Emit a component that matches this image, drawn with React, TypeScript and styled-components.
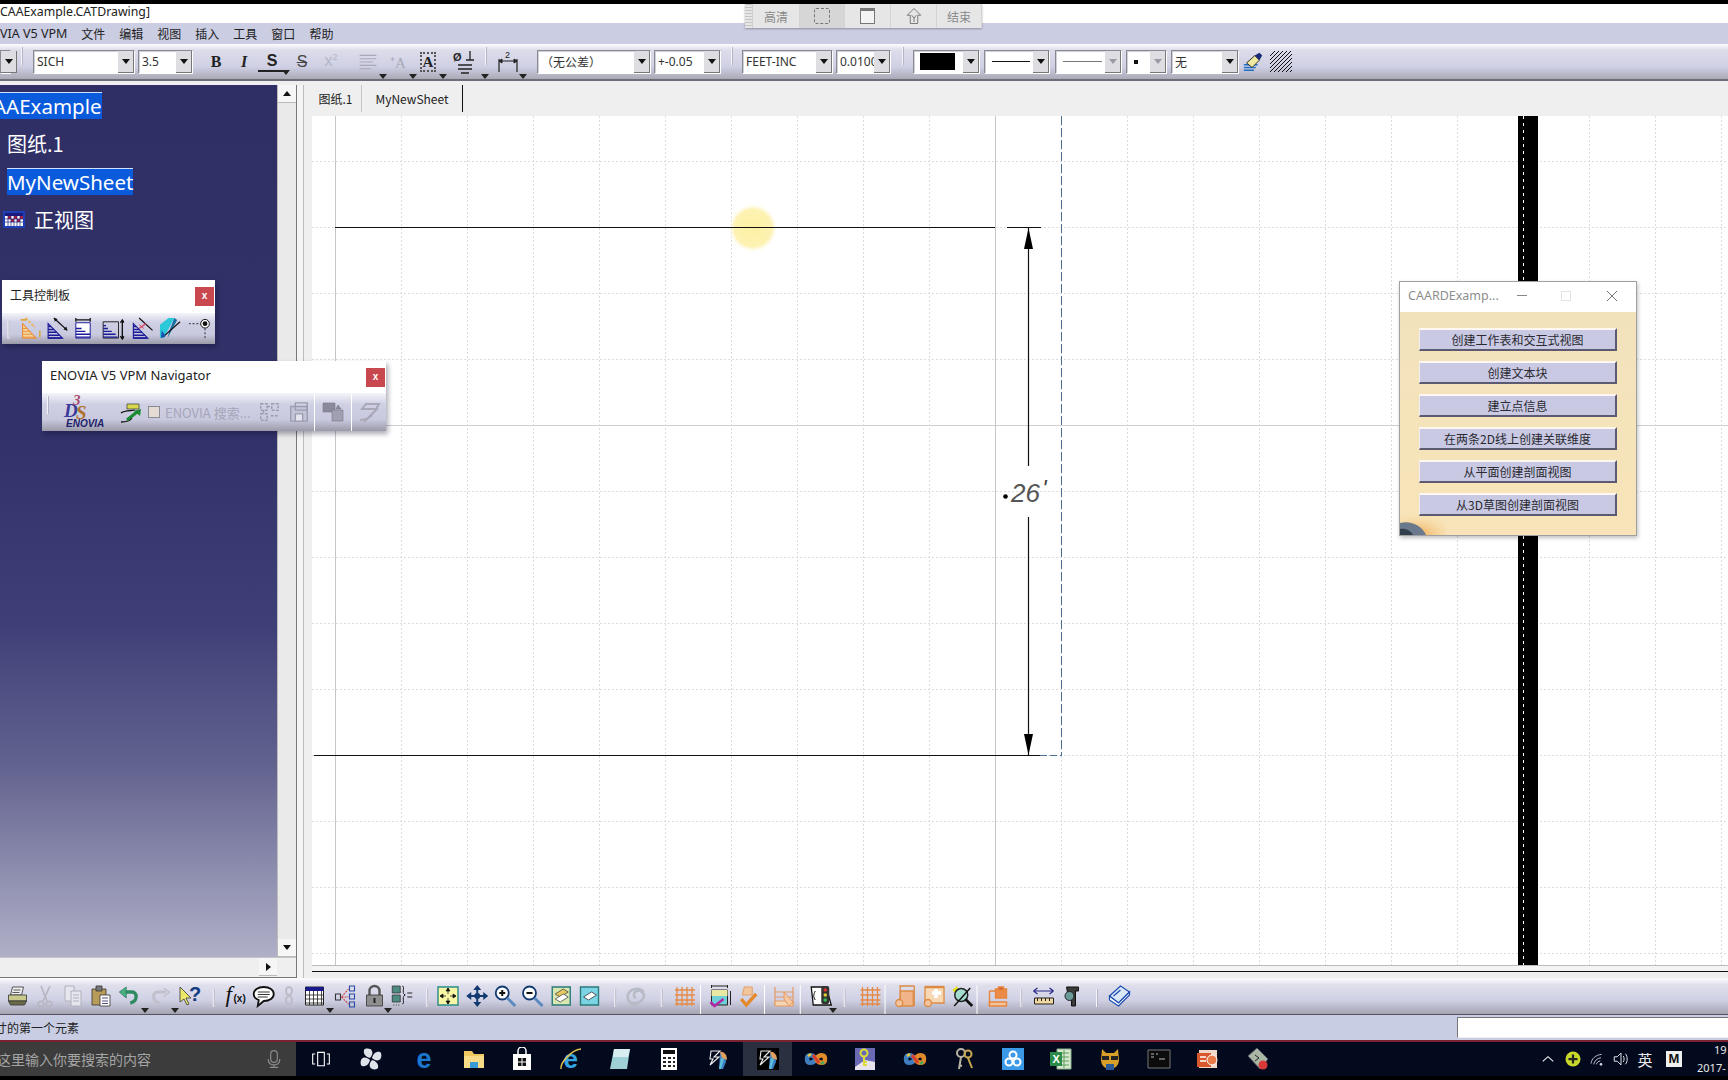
import React from "react";
import styled, { createGlobalStyle } from "styled-components";

const SANS = `"Noto Sans", "Noto Sans CJK SC", sans-serif`;
const CJK = `"Noto Sans CJK SC", "Noto Sans", sans-serif`;

const Global = createGlobalStyle`
  html, body { margin: 0; padding: 0; height: 100%; overflow: hidden; background: #000; }
  #root { height: 100%; }
  * { box-sizing: border-box; }
`;

/* ---------- drawn icons, all on a 24x24 box ---------- */
const hatch = (c: string) => (
  <g stroke={c} strokeWidth="1.5">
    <path d="M3 22h14M3 19h12M3 16h9M3 13h6M3 10h3" />
    <path d="M3 7v15h15z" fill="none" strokeWidth="1.2" />
  </g>
);
const orangeGrid = (
  <path d="M4 3v19M9 3v19M14 3v19M19 3v19M2 6h20M2 11h20M2 16h20M2 20h20" stroke="#e58a45" strokeWidth="1.3" fill="none" />
);
const dsMark = (bg: string) => (
  <g>
    {bg !== "none" && <rect x="1" y="1" width="22" height="22" fill={bg} />}
    <path d="M14 6c4 1 6 5 6 9l-3 7h-4z" fill="#3d7fc4" />
    <path d="M14 5c4-1 7 3 7 8l-5-2z" fill="#e0a060" />
    <path d="M15 11l3 1-3 10h-2z" fill="#5cc0d8" />
    <path d="M5 4h9L8 10h5l-9 8 3-6H4z" fill="none" stroke="#eee" strokeWidth="1.1" />
  </g>
);
const infinity = (
  <g fill="none" strokeWidth="4.5">
    <path d="M12 12c-3-5-9-5-9 0s6 5 9 0" stroke="#3f7fc0" />
    <path d="M12 12c3-5 9-5 9 0s-6 5-9 0" stroke="#e08a2c" />
    <path d="M9 8l6 8" stroke="#d8402c" strokeWidth="3" />
    <path d="M4 9l3-2" stroke="#e8c83c" strokeWidth="2.5" />
    <path d="M17 17l3-2" stroke="#4aa85a" strokeWidth="2.5" />
  </g>
);

const ICONS: Record<string, React.ReactNode> = {
  printer: (<g stroke="#333" strokeWidth=".8"><path d="M7 3h11l-2 8H5z" fill="#eee" /><path d="M3 11h18v6H3z" fill="#c9c98c" /><path d="M3 17h18l-2 4H5z" fill="#6b6b4a" /><path d="M8 6h7M7 8.500h7" /></g>),
  scissors: (<g fill="none" stroke="#b5b5c2" strokeWidth="1.6"><path d="M8 2l6 15M17 2l-7 15" /><circle cx="8" cy="20" r="2.800" /><circle cx="16" cy="20" r="2.800" /></g>),
  copy: (<g fill="#e6e6ee" stroke="#b0b0bc"><path d="M4 2h9v15H4z" /><path d="M10 7h10v15H10z" /><path d="M12 11h6M12 14h6M12 17h6" /></g>),
  paste: (<g stroke="#333" strokeWidth=".8"><path d="M3 5h14v16H3z" fill="#b79c5a" /><path d="M7 2h6v5H7z" fill="#777" /><path d="M11 11h10v11H11z" fill="#fff" /><path d="M13 14h6M13 17h6M13 19.500h6" stroke="#226" /></g>),
  undo: (<g fill="none"><path d="M6 8h9c5 0 6 9-2 11" stroke="#2f8a5f" strokeWidth="3.400" /><path d="M9 3L2 8l7 6z" fill="#48b080" stroke="#1a6a50" strokeWidth=".6" /></g>),
  redo: (<g fill="none" stroke="#c0c0cc" strokeWidth="3"><path d="M18 8H9c-5 0-6 9 2 11" /><path d="M15 4l6 4-6 5" strokeWidth="1.500" /></g>),
  help: (<g><path d="M3 3v15l4-3 3 6 2-1-3-6h5z" fill="#eee86a" stroke="#333" strokeWidth=".8" /><text x="12" y="17" fontFamily="Liberation Sans, sans-serif" fontWeight="700" fontSize="20" fill="#123a80">?</text></g>),
  fx: (<g fill="#111"><text x="1" y="18" fontFamily="Liberation Serif, serif" fontStyle="italic" fontSize="23">f</text><text x="9" y="18" fontFamily="Liberation Sans, sans-serif" fontSize="10" fontWeight="700">(x)</text></g>),
  comment: (<g><path d="M12 3c6 0 10 3 10 7s-4 7-10 7l-6 5 1-6c-3-1-5-3-5-6 0-4 4-7 10-7z" fill="#fff" stroke="#111" strokeWidth="1.800" /><path d="M6 8h12M6 10.500h12M6 13h10" stroke="#333" strokeWidth="1" /></g>),
  link: (<g fill="none" stroke="#bcbcc8" strokeWidth="2"><ellipse cx="12" cy="7" rx="3" ry="4" /><ellipse cx="12" cy="16" rx="3" ry="4" /></g>),
  table: (<g><path d="M3 3h18v18H3z" fill="#fff" stroke="#222" /><path d="M3 3h18v4H3z" fill="#18188c" /><path d="M7 7v14M11 7v14M15 7v14M19 7v14M3 11h18M3 15h18M3 19h18" stroke="#222" strokeWidth=".8" /></g>),
  tree: (<g fill="none" strokeWidth="1.100"><path d="M2 10h5v6H2z" stroke="#333" /><path d="M16 2h5v5h-5zM16 10h5v5h-5zM16 18h5v5h-5z" stroke="#2a4aa8" /><path d="M8 13l7-8M8 13h7M8 13l7 7" stroke="#c44" strokeDasharray="2 1" /></g>),
  lock: (<g><path d="M7 11V7a5 5 0 0 1 10 0v4" fill="none" stroke="#555" strokeWidth="2.400" /><path d="M4 11h16v11H4z" fill="#8f8f8f" stroke="#333" strokeWidth=".8" /><path d="M12 14v5" stroke="#222" strokeWidth="2" /></g>),
  formula: (<g><path d="M3 2h8v7H3zM3 11h8v7H3z" fill="#4d8a80" stroke="#333" strokeWidth=".8" /><path d="M4 21h1M6.500 21h1M9 21h1" stroke="#333" /><path d="M13 2c2 0 1 3 1 5s0 3 2 4c-2 1-2 2-2 4s1 5-1 5" fill="none" stroke="#222" /><path d="M18 9h5M18 13h5" stroke="#222" /></g>),
  fit: (<g><path d="M2 3h20v18H2z" fill="#f6f6a4" stroke="#2a8a8a" strokeWidth="1.400" /><path d="M12 4v6M12 14v6M4 12h6M14 12h6M12 4l-2 3h4zM12 20l-2-3h4zM4 12l3-2v4zM20 12l-3-2v4z" stroke="#111" fill="#111" strokeWidth=".7" /></g>),
  pan: (<g fill="#123a70"><path d="M12 1l4 5h-8zM12 23l4-5h-8zM1 12l5-4v8zM23 12l-5-4v8z" /><path d="M12 5v14M5 12h14" stroke="#123a70" strokeWidth="2" /><circle cx="12" cy="12" r="3" /></g>),
  zoomin: (<g fill="none"><circle cx="9" cy="9" r="6.500" stroke="#123a70" strokeWidth="1.800" fill="#fff" /><path d="M6 9h6M9 6v6" stroke="#111" strokeWidth="2" /><path d="M14 14l8 8" stroke="#5a8ac0" strokeWidth="3" /></g>),
  zoomout: (<g fill="none"><circle cx="9" cy="9" r="6.500" stroke="#123a70" strokeWidth="1.800" fill="#fff" /><path d="M6 9h6" stroke="#111" strokeWidth="2" /><path d="M14 14l8 8" stroke="#5a8ac0" strokeWidth="3" /></g>),
  view1: (<g><path d="M3 3h18v18H3z" fill="#d8e8b0" stroke="#2a7a7a" strokeWidth="1.400" /><path d="M6 10l8-5 5 3-8 5z" fill="#e8c860" stroke="#333" strokeWidth=".7" /><path d="M6 15l8-5 5 3-8 5z" fill="#fff" stroke="#333" strokeWidth=".7" /></g>),
  view2: (<g><path d="M3 3h18v18H3z" fill="#7ad4e4" stroke="#2a7a7a" strokeWidth="1.400" /><path d="M6 13l8-5 5 3-8 5z" fill="#fff" stroke="#333" strokeWidth=".8" /></g>),
  cycle: (<g fill="none" stroke="#b8bcc6" strokeWidth="2.600"><path d="M20 8a9.500 9.500 0 0 0-16 3c-1 7 5 11 10 10" /><path d="M4 16a9.500 9.500 0 0 0 16-3c1-4-3-7-7-6-3 1-4 5-1 7" /></g>),
  gridO: orangeGrid,
  mark: (<g><path d="M4 6h16v15H4z" fill="#6ecfd8" stroke="#222" /><path d="M4 6h16v6H4z" fill="#e8e8a4" /><path d="M4 2h16M4 1v3M20 1v3" stroke="#222" /><path d="M3 18l4 4 9-7" fill="none" stroke="#b02aa8" strokeWidth="2.600" /><path d="M23 7v14" stroke="#222" /></g>),
  handCheck: (<g fill="none"><path d="M8 3h8v8H6z" fill="#f2c49a" stroke="#e2a06a" /><path d="M5 15l5 6 10-11" stroke="#e58a2c" strokeWidth="3.400" /></g>),
  hatchHand: (<g fill="none" stroke="#e59a60"><path d="M3 3v19M21 3v19M3 8h18M3 13h18" strokeWidth="1.200" /><path d="M3 17h18v5H3z" fill="#f4d4b4" /><path d="M12 8l9 10-4 4-5-7z" fill="#f4c8a0" /></g>),
  traffic: (<g><path d="M2 3h15l5 18H4z" fill="#fff" stroke="#111" strokeWidth="1.300" /><path d="M6 7c-2 4-2 6 0 9" fill="none" stroke="#111" /><rect x="12" y="2" width="8" height="18" rx="2" fill="#333" /><circle cx="16" cy="6" r="1.800" fill="#d33" /><circle cx="16" cy="11" r="1.800" fill="#dc3" /><circle cx="16" cy="16" r="1.800" fill="#3b5" /></g>),
  hatchA: (<g fill="none" stroke="#dd8a44" strokeWidth="1.300"><path d="M5 2h15M6 2v20M20 2v20" /><path d="M6 7h13v15H6z" fill="#f0b488" /><circle cx="5" cy="19" r="3.500" fill="#f4c49c" /></g>),
  hatchB: (<g fill="none" stroke="#dd8a44" strokeWidth="1.300"><path d="M3 3h19v16H3z" fill="#f6d8b4" /><path d="M10 9h9M14 5v9" stroke="#fff" strokeWidth="3.400" /><path d="M3 3h19" strokeWidth="2.400" /><circle cx="6" cy="19" r="3.500" fill="#f4c49c" /></g>),
  yellowMag: (<g><path d="M2 6l5-4 1 5 4-1-5 5z" fill="#e4e418" /><circle cx="11" cy="11" r="6.500" fill="#a4dcd0" stroke="#222" strokeWidth="1.500" /><path d="M4 22L20 4" stroke="#111" strokeWidth="1.500" /><path d="M15 15l7 7" stroke="#111" strokeWidth="2.600" /></g>),
  hatchC: (<g fill="none" stroke="#e8853c" strokeWidth="1.400"><path d="M3 7v15M3 7h15" /><path d="M9 5h11v9H9z" fill="#ec8a48" /><path d="M3 18h17v4H3z" fill="#f4c49c" /><path d="M12 3h5v3h-5z" fill="#d05a30" /></g>),
  measure: (<g fill="none"><path d="M2 7h20M2 7l4-3M2 7l4 3M22 7l-4-3M22 7l-4 3" stroke="#2a2a8a" strokeWidth="1.200" /><path d="M3 14h19v6H3z" fill="#f0d8a0" stroke="#222" /><path d="M6 14v3M10 14v3M14 14v3M18 14v3" stroke="#222" /></g>),
  caliper: (<g><path d="M7 3h12v4h-3v15h-4v-8H9z" fill="#3a3a3a" stroke="#111" /><circle cx="10" cy="12" r="4.500" fill="#6a9a9a" stroke="#222" /></g>),
  book: (<g fill="#dbe8fa" stroke="#1a4ab0" strokeWidth="1.200"><path d="M2 12L13 2l9 6-11 11z" /><path d="M2 12v4l9 6 11-11V8L11 19z" fill="#fff" /><path d="M6 12l7-6" /></g>),
  palA: (<g fill="none"><path d="M4 7v15h14z" fill="#f6d6a0" stroke="#e8903c" strokeWidth="1.200" /><path d="M4 21h13M4 18h10M4 15h7M4 12h4" stroke="#e8903c" /><path d="M7 1l10 10" stroke="#e8b860" strokeWidth="2" strokeDasharray="3 1.500" /><path d="M22 14v7M2 3h6" stroke="#d8a840" strokeWidth="1.600" /></g>),
  palB: (<g fill="none">{hatch("#1a1a9a")}<path d="M9 1l14 13" stroke="#111" strokeWidth="1.300" /><path d="M9 1l1 4 3-3zM23 14l-4-1 3-3z" fill="#111" /></g>),
  palC: (<g fill="none"><path d="M4 6v16h15V6z" fill="#fff" stroke="#1a1a9a" /><path d="M4 21h15M4 18h15M4 15h10M4 12h6" stroke="#1a1a9a" strokeWidth="1.500" /><path d="M4 3h15M4 1v4M19 1v4" stroke="#111" strokeWidth="1.300" /></g>),
  palD: (<g fill="none"><path d="M2 5h16v17H2z" stroke="#222" /><path d="M2 21h15M2 18h13M2 15h9M2 12h5M2 9h3" stroke="#1a1a9a" strokeWidth="1.500" /><path d="M22 4v18M20 6l2-3 2 3M20 20l2 3 2-3" stroke="#111" strokeWidth="1.400" /></g>),
  palE: (<g fill="none">{hatch("#1a1a9a")}<path d="M9 1l14 13" stroke="#111" strokeWidth="1.300" /><path d="M9 12l7-5" stroke="#d84a6a" strokeWidth="1.500" /><path d="M9 8l5 4" stroke="#d84a6a" /></g>),
  palF: (<g fill="none"><path d="M2 8l9-7h6L6 22H2z" fill="#2ac8d8" /><path d="M12 14l5-13 3 2-10 19z" fill="#1870a0" /><path d="M5 21L23 5" stroke="#111" strokeWidth="1.300" /><path d="M4 14l-1 8 5-2z" fill="#1a50b0" /></g>),
  palG: (<g><path d="M0 7h13M17 12v11" stroke="#222" strokeDasharray="2 2" /><circle cx="17" cy="7" r="4.500" fill="#fff" stroke="#111" /><circle cx="17" cy="7" r="2.500" fill="#111" /></g>),
  navA: (<g fill="none"><path d="M8 4h12v5H8z" fill="#d8d84a" stroke="#333" strokeWidth=".7" /><path d="M2 13c3-3 12-2 14-3" stroke="#111" strokeWidth="1.300" /><path d="M2 22c3 0 9-1 11-4" stroke="#111" strokeWidth="1.300" /><path d="M8 20l10-8" stroke="#1a8a30" strokeWidth="3" /><path d="M22 9l-1 7-6-5z" fill="#1a8a30" /></g>),
  navB: (<g fill="none" stroke="#9c9cb0" strokeWidth="1.600" strokeDasharray="3 1.500"><path d="M3 3h7v7H3zM15 3h7v7h-7zM3 14h7v7H3zM10 6h5M6 10v4M14 16h8" /></g>),
  navC: (<g fill="none" stroke="#9c9cb0" strokeWidth="1.500"><path d="M3 6h18v16H3z" fill="#c4c4d8" /><path d="M8 2h13v8H8z" /><path d="M8 14h8v8H8z" fill="#e4e4ee" /></g>),
  navD: (<g fill="#8a8a9c" stroke="#777785" strokeWidth=".6"><path d="M2 3h12v9H2z" /><path d="M11 10h11v11H11z" fill="#a0a0b2" /><path d="M17 5l3 4h-5z" /></g>),
  navE: (<g fill="none" stroke="#a8a8b8" strokeWidth="2"><path d="M5 9h14l3-5H9zM3 20c4 0 10-2 12-5M7 22l14-14" /></g>),
  taskView: (<g fill="none" stroke="#fff" strokeWidth="1.300"><path d="M8 4h8v16H8z" /><path d="M5 6H2v12h3M19 6h3v12h-3" /></g>),
  fan: (<g fill="#dfe4ea"><path d="M11 11C7 10 4 7 5 3c1-2 7-2 8 1 1 2 0 5-2 7z" /><path d="M13 11c1-4 4-7 8-6 2 1 2 7-1 8-2 1-5 0-7-2z" /><path d="M13 13c4 1 7 4 6 8-1 2-7 2-8-1-1-2 0-5 2-7z" /><path d="M11 13c-1 4-4 7-8 6-2-1-2-7 1-8 2-1 5 0 7 2z" /></g>),
  edge: (<text x="4.500" y="21" fontFamily="Liberation Sans, sans-serif" fontWeight="700" fontSize="27" fill="#1a78d0">e</text>),
  folder: (<g><path d="M2 4h8l2 3h10v14H2z" fill="#f0c860" /><path d="M2 9h20v12H2z" fill="#f8dc88" /><path d="M8 15h8v6H8z" fill="#3a9ad8" /></g>),
  store: (<g><path d="M3 7h18v16H3z" fill="#fff" /><path d="M8 8V4a4 4 0 0 1 8 0v4" fill="none" stroke="#fff" strokeWidth="1.500" /><path d="M8 11h3.500v3.500H8zM12.500 11H16v3.500h-3.500zM8 15.500h3.500V19H8zM12.500 15.500H16V19h-3.500z" fill="#111" /></g>),
  ie: (<g><text x="4.500" y="21" fontFamily="Liberation Sans, sans-serif" fontWeight="700" fontSize="26" fill="#33a4e4">e</text><path d="M2 22C1 16 12 3 22 2" fill="none" stroke="#e0c050" strokeWidth="1.500" /></g>),
  notepad: (<g><path d="M6 2h16l-3 20H2z" fill="#9ed0d8" /><path d="M6 2h16l-2 8H5z" fill="#d8eef0" /></g>),
  calc: (<g><path d="M4 1h16v22H4z" fill="#fff" /><path d="M6 3h12v4H6z" fill="#111" /><path d="M6 10h3v2H6zM11 10h3v2h-3zM16 10h2v2h-2zM6 14h3v2H6zM11 14h3v2h-3zM16 14h2v2h-2zM6 18h3v2H6zM11 18h3v2h-3zM16 18h2v2h-2z" fill="#222" /></g>),
  ds: dsMark("none"),
  dsBlack: dsMark("#000"),
  infinity,
  keyBook: (<g><path d="M2 1h20v22H2z" fill="#6a6ab4" /><path d="M2 20l10-7 10 2v8H2z" fill="#e8e4ee" /><circle cx="11" cy="6" r="3.500" fill="none" stroke="#dcdc3a" strokeWidth="2" /><path d="M11 9v10M11 15h3M11 18h3" stroke="#dcdc3a" strokeWidth="2" /></g>),
  keys: (<g fill="none" stroke="#b8b4a4" strokeWidth="2"><circle cx="9" cy="6" r="4" /><path d="M9 10l-2 12M7 18l3 1" /><circle cx="16" cy="7" r="3.500" stroke="#c8a850" /><path d="M16 11l4 10" stroke="#c8a850" /></g>),
  baidu: (<g><path d="M1 1h22v22H1z" fill="#3b9ae8" /><g fill="none" stroke="#fff" strokeWidth="2"><circle cx="12" cy="8" r="3.500" /><circle cx="8" cy="15" r="3.500" /><circle cx="16" cy="15" r="3.500" /></g></g>),
  excel: (<g><path d="M8 2h14v20H8z" fill="#d8e8d0" stroke="#8ab08a" /><path d="M11 6h9M11 10h9M11 14h9M11 18h9M15 3v18" stroke="#5aa05a" /><path d="M1 5h12v14H1z" fill="#2a8a4a" /><text x="3.500" y="16" fontFamily="Liberation Sans, sans-serif" fontWeight="700" fontSize="11" fill="#fff">X</text></g>),
  cat: (<g><path d="M4 2l4 4h8l4-4 1 11c0 5-4 9-9 9s-9-4-9-9z" fill="#d8a028" /><path d="M4 9h7v4H4zM13 9h7v4h-7z" fill="#222" /><path d="M8 17h8v6H8z" fill="#2a5a9a" /></g>),
  cmd: (<g><path d="M1 3h22v18H1z" fill="#0c0c0c" stroke="#777" /><path d="M4 7h3M9 7h2M4 10h3M12 12h6" stroke="#bbb" /></g>),
  ppt: (<g><path d="M3 3h18v18H3z" fill="#f0d8c8" /><path d="M1 6h14v14H1z" fill="#d8582c" /><circle cx="16" cy="13" r="5" fill="#e87a4a" stroke="#fff" /><path d="M4 10h6M4 14h6" stroke="#fff" strokeWidth="1.500" /></g>),
  tool: (<g><path d="M11 1l11 11-8 10L2 9z" fill="#a8b8a4" stroke="#556" /><path d="M9 8l4 3-4 3" fill="none" stroke="#222" /><circle cx="17" cy="18" r="4.500" fill="#d83a3a" /></g>),
  caret: (<path d="M3 16l9-8 9 8" fill="none" stroke="#eee" strokeWidth="2" />),
  plus: (<g><circle cx="12" cy="12" r="10" fill="#c8d82a" /><path d="M12 6v12M6 12h12" stroke="#222" strokeWidth="3" /></g>),
  wifi: (<g fill="none" stroke="#d0d4dc" strokeWidth="1.300"><path d="M3 19c1-8 7-13 16-14" /><path d="M7 20c1-5 5-9 11-10" /><path d="M11 20c1-3 3-5 6-5" /><circle cx="18" cy="20" r="1.500" fill="#eee" /></g>),
  speaker: (<g fill="none" stroke="#e0e4ea" strokeWidth="1.300"><path d="M3 9h4l5-5v16l-5-5H3z" /><path d="M15 8c1.500 2 1.500 6 0 8M18 5c3 4 3 10 0 14" /></g>),
  mic: (<g fill="none" stroke="#8a8a8a" strokeWidth="1.400"><rect x="8" y="2" width="8" height="14" rx="4" /><path d="M5 12c0 5 3 7 7 7s7-2 7-7M12 19v3M7 22h10" /></g>),
  tree3d: (<g><rect x="1" y="4" width="22" height="17" fill="#1f3fb8" /><rect x="3" y="6" width="18" height="13" fill="#fff" /><path d="M3 6h18v3H3z" fill="#1a1a7a" /><path d="M6 9h3v3H6zM12 9h3v3h-3zM18 9h3v3h-3zM9 12h3v3H9zM15 12h3v3h-3z" fill="#b0203a" /><path d="M6 9v10M9 9v10M12 9v10M15 9v10M18 9v10M3 12h18M3 15h18" stroke="#1a1a7a" strokeWidth=".7" /></g>),
  brush: (<g><path d="M2 15h15M2 18h13M2 21h11" stroke="#2070c8" strokeWidth="1.600" /><path d="M5 13l9-8 5 5-8 8z" fill="#f0e8a0" stroke="#222" /><path d="M14 5l5-3 3 3-3 5z" fill="#1a2a7a" /></g>),
  hatch: (<g stroke="#111" strokeWidth="1"><path d="M1 6l5-5M1 10l9-9M1 14L14 1M1 18L18 1M1 22L22 1M5 22L23 4M9 22l14-14M13 22l10-10M17 22l6-6M21 22l2-2" /></g>),
  align: (<path d="M2 4h20M2 8h20M2 12h16M2 16h20M2 20h14" stroke="#a8a8b8" strokeWidth="1.300" />),
  dim: (<g fill="none" stroke="#222"><path d="M3 11h18M3 9v13M21 9v13" strokeWidth="1.200" /><path d="M3 11l3-2v4zM21 11l-3-2v4z" fill="#222" /><text x="9" y="8" fontFamily="Liberation Sans, sans-serif" fontSize="9" fill="#222" stroke="none">2</text></g>),
  tol: (<g><text x="1" y="11" fontFamily="Liberation Sans, sans-serif" fontSize="11" fontWeight="700" fill="#222">Ø</text><path d="M14 10h8M18 1v9M6 15h14M6 19h14M9 23h8" stroke="#222" strokeWidth="1.300" /></g>),
  homeRec: (<g fill="none" stroke="#777" strokeWidth="1.300"><path d="M12 2L3 11h4v11h10V11h4z" /><path d="M9 11l3 4 3-4M12 15v5" /></g>),
};

const IconBox = styled.svg<{ $s: number }>`
  width: ${(p) => p.$s}px;
  height: ${(p) => p.$s}px;
  display: block;
  flex: none;
`;
const Ico = ({ n, s = 24 }: { n: string; s?: number }) => (
  <IconBox $s={s} viewBox="0 0 24 24">{ICONS[n]}</IconBox>
);

/* ---------- page frame ---------- */
const Page = styled.div`
  position: relative;
  width: 1728px;
  height: 1080px;
  overflow: hidden;
  display: flex;
  flex-direction: column;
  background: #efefef;
  font-family: ${SANS};
`;
const BlackBand = styled.div`
  height: 4px;
  background: #000;
  flex: none;
`;
const TitleBar = styled.div`
  height: 19px;
  flex: none;
  background: #fff;
  font-size: 12.3px;
  line-height: 15px;
  color: #222;
  white-space: nowrap;
`;
const MenuBar = styled.div`
  height: 21px;
  flex: none;
  display: flex;
  align-items: center;
  gap: 14px;
  background: #cbcde2;
  font-family: ${CJK};
  font-size: 12px;
  color: #222;
`;
const MenuLabel = styled.span`
  font-family: ${SANS};
  font-size: 12.5px;
`;
const ToolRow = styled.div`
  height: 37px;
  flex: none;
  display: flex;
  align-items: center;
  background: linear-gradient(#fdfdfe 0, #dcdcea 18%, #cfd0e4 65%, #a9a9b6 100%);
  border-bottom: 2px solid #6e6e78;
`;
const Gap = styled.div<{ $w: number }>`
  width: ${(p) => p.$w}px;
  flex: none;
`;
const Handle = styled.div`
  width: 2px;
  height: 18px;
  flex: none;
  align-self: flex-start;
  margin-top: 3px;
  background: #f4f4fa;
  border-right: 1px solid #b4b4c4;
`;
const Rule = styled.div`
  width: 1px;
  height: 29px;
  background: #fff;
  transform: translateY(3px);
`;
const Combo = styled.div<{ $w: number }>`
  width: ${(p) => p.$w}px;
  height: 24px;
  flex: none;
  display: flex;
  align-items: stretch;
  background: #fff;
  border: 1px solid #8a8a92;
  border-right-color: #fff;
  border-bottom-color: #fff;
  box-shadow: inset 1px 1px 0 #d0d0d8;
  font-size: 12px;
  color: #333;
`;
const ComboValue = styled.div`
  flex: 1;
  min-width: 0;
  overflow: hidden;
  padding-left: 3px;
  display: flex;
  align-items: center;
  white-space: nowrap;
  font-family: ${SANS};
`;
const ComboArrow = styled.div<{ $off?: boolean }>`
  width: 16px;
  flex: none;
  display: flex;
  align-items: center;
  justify-content: center;
  background: #dedee2;
  border-right: 1px solid #777;
  border-bottom: 1px solid #777;
  &::after {
    content: "";
    border-left: 4px solid transparent;
    border-right: 4px solid transparent;
    border-top: 5px solid ${(p) => (p.$off ? "#9a9aa4" : "#111")};
  }
`;
const Swatch = styled.div`
  width: 36px;
  height: 17px;
  background: #000;
  margin: auto 0 auto 6px;
`;
const RuleLine = styled.div<{ $l: number; $c: string }>`
  width: ${(p) => p.$l}px;
  height: 1px;
  background: ${(p) => p.$c};
  margin: auto 0 auto 7px;
`;
const Dot = styled.div`
  width: 4px;
  height: 4px;
  background: #111;
  margin: auto 0 auto 7px;
`;
const FontBtn = styled.div<{ $w: number; $c?: string; $serif?: boolean; $i?: boolean; $u?: boolean; $st?: boolean; $thin?: boolean }>`
  position: relative;
  width: ${(p) => p.$w}px;
  flex: none;
  text-align: center;
  font-family: ${(p) => (p.$serif ? `"Liberation Serif", serif` : `"Liberation Sans", sans-serif`)};
  font-weight: ${(p) => (p.$thin ? 400 : 700)};
  font-style: ${(p) => (p.$i ? "italic" : "normal")};
  font-size: 16px;
  color: ${(p) => p.$c || "#222"};
  text-decoration: ${(p) => (p.$st ? "line-through" : "none")};
  border-bottom: ${(p) => (p.$u ? "2px solid #222" : "none")};
`;
const SmallArrow = styled.i`
  position: absolute;
  right: -4px;
  bottom: -5px;
  width: 0;
  height: 0;
  border-left: 4px solid transparent;
  border-right: 4px solid transparent;
  border-top: 5px solid #222;
`;
const IconSlot = styled.div<{ $w: number }>`
  position: relative;
  width: ${(p) => p.$w}px;
  height: 24px;
  flex: none;
  display: flex;
  justify-content: center;
  align-items: center;
`;
const BoxA = styled.div`
  width: 16px;
  height: 20px;
  border: 2px dotted #555;
  font-family: "Liberation Serif", serif;
  font-size: 15px;
  line-height: 16px;
  text-align: center;
  color: #222;
  font-weight: 700;
`;
const FadedA = styled.span`
  font-family: "Liberation Serif", serif;
  font-size: 15px;
  color: #a8a8b8;
`;
const Sup = styled.sup`
  font-size: 9px;
`;

/* ---------- body ---------- */
const Body = styled.div`
  flex: 1;
  min-height: 0;
  display: flex;
  padding-top: 4px;
  background: #efefef;
`;
const LeftColumn = styled.div`
  width: 297px;
  flex: none;
  display: flex;
  flex-direction: column;
  border-right: 1px solid #777;
`;
const TreeRow = styled.div`
  flex: 1;
  min-height: 0;
  display: flex;
`;
const Tree = styled.div`
  flex: 1;
  min-width: 0;
  overflow: hidden;
  padding-top: 1px;
  background: linear-gradient(#2f2f66 0, #32326a 40%, #3f3f78 62%, #62628f 78%, #b0b0c8 100%);
  color: #fff;
`;
const TreeItem = styled.div<{ $pl: number; $cjk?: boolean }>`
  height: 38px;
  display: flex;
  align-items: center;
  gap: 8px;
  padding-left: ${(p) => p.$pl}px;
  font-family: ${(p) => (p.$cjk ? CJK : SANS)};
  font-size: ${(p) => (p.$cjk ? 20 : 20.5)}px;
  white-space: nowrap;
`;
const Selected = styled.span<{ $ml?: number }>`
  background: #0a5adc;
  height: 27px;
  line-height: 26px;
  margin-left: ${(p) => p.$ml || 0}px;
  border-top: 1px solid #cfe0ff;
`;
const VScroll = styled.div`
  width: 19px;
  flex: none;
  display: flex;
  flex-direction: column;
  justify-content: space-between;
  background: #eaeaea;
  border-left: 1px solid #bbb;
`;
const ScrollBtn = styled.div<{ $dir: "up" | "down" | "right" }>`
  height: 18px;
  width: 18px;
  flex: none;
  display: flex;
  align-items: center;
  justify-content: center;
  background: #f6f6f6;
  border-bottom: 1px solid #bbb;
  &::after {
    content: "";
    ${(p) =>
      p.$dir === "up"
        ? "border-left:4px solid transparent;border-right:4px solid transparent;border-bottom:5px solid #111;"
        : p.$dir === "down"
        ? "border-left:4px solid transparent;border-right:4px solid transparent;border-top:5px solid #111;"
        : "border-top:4px solid transparent;border-bottom:4px solid transparent;border-left:5px solid #111;"}
  }
`;
const HScroll = styled.div`
  height: 21px;
  flex: none;
  display: flex;
  justify-content: flex-end;
  padding-right: 19px;
  background: #efefef;
  border-top: 1px solid #c4c4c4;
  border-bottom: 1px solid #777;
`;
const Sash = styled.div`
  width: 7px;
  flex: none;
  background: #f4f4f4;
  border-right: 1px solid #bdbdbd;
`;
const RightColumn = styled.div`
  flex: 1;
  min-width: 0;
  display: flex;
  flex-direction: column;
  padding-left: 8px;
`;
const Tabs = styled.div`
  height: 27px;
  flex: none;
  display: flex;
  align-items: flex-start;
  margin-left: -4px;
  padding-left: 2px;
  font-size: 12px;
  color: #222;
`;
const Tab = styled.div<{ $w: number; $active?: boolean }>`
  width: ${(p) => p.$w}px;
  height: 27px;
  display: flex;
  align-items: center;
  justify-content: center;
  font-family: ${CJK};
  border-right: 1px solid ${(p) => (p.$active ? "#111" : "#c4c4c4")};
`;
const CanvasFrame = styled.div`
  margin-top: 4px;
  flex: 1;
  min-height: 0;
  display: flex;
  flex-direction: column;
`;
const Canvas = styled.svg`
  display: block;
  width: 1416px;
  height: 849px;
  flex: none;
  background: #fff;
`;
const CanvasFooter = styled.div`
  height: 7px;
  flex: none;
  background: #f4f4f4;
  border-top: 1px solid #bbb;
  border-bottom: 1px solid #111;
`;

/* ---------- bottom bars ---------- */
const BottomBar = styled.div`
  height: 37px;
  flex: none;
  display: flex;
  align-items: center;
  background: linear-gradient(#fdfdfe 0, #dfdfec 20%, #cfd0e4 62%, #a4a4b2 100%);
  border-bottom: 1px solid #55555f;
`;
const StatusBar = styled.div`
  height: 25px;
  flex: none;
  display: flex;
  align-items: center;
  justify-content: space-between;
  background: #c9cde3;
  font-family: ${CJK};
  font-size: 12px;
  color: #222;
  overflow: hidden;
`;
const StatusText = styled.span`
  margin-left: -5px;
`;
const StatusField = styled.div`
  width: 271px;
  height: 21px;
  background: #fff;
  border: 1px solid #777;
  border-right: none;
  border-bottom-color: #eee;
`;
const Taskbar = styled.div`
  height: 36px;
  flex: none;
  display: flex;
  align-items: center;
  background: #040a1e;
  border-top: 2px solid #7a2230;
  color: #e8e8e8;
`;
const SearchBox = styled.div`
  width: 296px;
  height: 100%;
  flex: none;
  display: flex;
  align-items: center;
  justify-content: space-between;
  padding-right: 12px;
  background: #3c3c3c;
  color: #a4a4a4;
  font-family: ${CJK};
  font-size: 14px;
  overflow: hidden;
`;
const SearchHint = styled.span`
  margin-left: -3px;
`;
const TaskSlot = styled.div<{ $w: number; $active?: boolean }>`
  width: ${(p) => p.$w}px;
  height: 100%;
  flex: none;
  display: flex;
  align-items: center;
  justify-content: center;
  background: ${(p) => (p.$active ? "#2a3040" : "transparent")};
  font-family: ${CJK};
  font-size: 15px;
`;
const MBadge = styled.span`
  width: 16px;
  height: 16px;
  background: #f0f0f0;
  color: #111;
  font-family: "Liberation Sans", sans-serif;
  font-weight: 700;
  font-size: 13px;
  line-height: 16px;
  text-align: center;
`;
const Clock = styled.div`
  margin-left: auto;
  width: 31px;
  flex: none;
  font-size: 11px;
  line-height: 18px;
  white-space: nowrap;
`;
const ClockTime = styled.div`
  padding-left: 17px;
`;

/* ---------- floating parts ---------- */
const Recorder = styled.div`
  position: absolute;
  left: 745px;
  top: 4px;
  width: 237px;
  height: 24px;
  display: flex;
  background: #e6e6e6;
  box-shadow: 0 1px 2px rgba(0, 0, 0, 0.3);
  color: #8a8a8a;
  font-family: ${CJK};
  font-size: 12px;
`;
const RecGrip = styled.div`
  width: 8px;
  border-right: 1px solid #d0d0d0;
  background: repeating-linear-gradient(#c4c4c4 0 1px, transparent 1px 3px);
`;
const RecCell = styled.div<{ $w: number; $on?: boolean }>`
  width: ${(p) => p.$w}px;
  display: flex;
  align-items: center;
  justify-content: center;
  border-right: 1px solid #d4d4d4;
  background: ${(p) => (p.$on ? "#d6d6d6" : "transparent")};
`;
const RecDash = styled.div`
  width: 16px;
  height: 16px;
  border: 1px dashed #777;
  border-radius: 2px;
`;
const RecWin = styled.div`
  width: 15px;
  height: 16px;
  border: 1px solid #777;
  border-top-width: 3px;
  background: #f4f4f4;
`;
const Palette = styled.div<{ $x: number; $y: number; $w: number }>`
  position: absolute;
  left: ${(p) => p.$x}px;
  top: ${(p) => p.$y}px;
  width: ${(p) => p.$w}px;
  display: flex;
  flex-direction: column;
  box-shadow: 2px 3px 5px rgba(10, 10, 40, 0.35);
`;
const PaletteHead = styled.div<{ $h: number; $fs: number }>`
  height: ${(p) => p.$h}px;
  display: flex;
  align-items: center;
  justify-content: space-between;
  padding: 0 1px 0 8px;
  background: #fff;
  font-family: ${SANS};
  font-size: ${(p) => p.$fs}px;
  color: #222;
`;
const PaletteName = styled.span`
  transform: translateY(-2px);
`;
const CloseX = styled.div`
  width: 19px;
  height: 19px;
  background: #c9474f;
  color: #fff;
  font-family: "Liberation Sans", sans-serif;
  font-size: 10px;
  font-weight: 700;
  line-height: 18px;
  text-align: center;
`;
const PaletteBody = styled.div<{ $h: number }>`
  height: ${(p) => p.$h}px;
  display: flex;
  align-items: center;
  background: linear-gradient(#f4f4fa 0, #cfd0e4 30%, #c8c9de 70%, #9a9aa8 100%);
`;
const PaletteDivider = styled.div`
  width: 1px;
  align-self: stretch;
  background: #fff;
`;
const EnoviaLogo = styled.div`
  position: relative;
  width: 48px;
  height: 32px;
  flex: none;
`;
const EnoviaText = styled.span`
  position: absolute;
  left: 6px;
  bottom: -1px;
  font-family: "Liberation Sans", sans-serif;
  font-weight: 700;
  font-style: italic;
  font-size: 10px;
  color: #22226a;
`;
const DsLetter = styled.span<{ $x: number; $y: number; $c: string; $fs: number }>`
  position: absolute;
  left: ${(p) => p.$x}px;
  top: ${(p) => p.$y}px;
  font-family: "Liberation Serif", serif;
  font-weight: 700;
  font-style: italic;
  font-size: ${(p) => p.$fs}px;
  line-height: 1;
  color: ${(p) => p.$c};
`;
const NavCheck = styled.div`
  width: 12px;
  height: 12px;
  flex: none;
  background: #e4dcd4;
  border: 1px solid #8a8a94;
`;
const NavSearch = styled.div`
  width: 94px;
  flex: none;
  padding-left: 5px;
  font-family: ${CJK};
  font-size: 13px;
  color: #a6a6ba;
  white-space: nowrap;
`;
const Dialog = styled.div`
  position: absolute;
  left: 1399px;
  top: 281px;
  width: 238px;
  height: 255px;
  display: flex;
  flex-direction: column;
  border: 1px solid #a0a0a0;
  box-shadow: 1px 2px 4px rgba(0, 0, 0, 0.25);
`;
const DialogHead = styled.div`
  height: 30px;
  flex: none;
  display: flex;
  align-items: center;
  background: #fff;
  padding: 0 0 3px 8px;
  color: #8e8e8e;
  font-size: 12.5px;
`;
const DialogTitle = styled.span`
  width: 96px;
  flex: none;
  white-space: nowrap;
`;
const DialogCtl = styled.div<{ $w: number }>`
  width: ${(p) => p.$w}px;
  flex: none;
  display: flex;
  justify-content: center;
`;
const CtlMin = styled.div`
  width: 10px;
  height: 1px;
  background: #888;
`;
const CtlMax = styled.div`
  width: 10px;
  height: 10px;
  border: 1px solid #e4e4e4;
`;
const DialogBody = styled.div`
  position: relative;
  flex: 1;
  display: flex;
  flex-direction: column;
  gap: 10px;
  padding: 16px 19px 0 19px;
  background: linear-gradient(#f2e2bc, #f8e4b8);
`;
const DlgButton = styled.div`
  position: relative;
  height: 23px;
  display: flex;
  align-items: center;
  justify-content: center;
  background: #c9c9e4;
  border-top: 2px solid #fff8f0;
  border-bottom: 2px solid #5c5a70;
  border-right: 2px solid #5c5a70;
  border-left: 1px solid #f0ecf0;
  font-family: ${CJK};
  font-size: 12px;
  color: #2a2a30;
`;
const Globe = styled.svg`
  position: absolute;
  left: 0;
  bottom: 0;
  width: 46px;
  height: 26px;
`;

/* ---------- data ---------- */
type Item = { c: number; n?: string; s?: number; arrow?: boolean };

const stripSlots = (items: Item[], start: number) => {
  let edge = start;
  return items.map((it, i) => {
    const next = items[i + 1];
    const right = next ? (it.c + next.c) / 2 : it.c + 14;
    const w = right - edge;
    const el = { ...it, w, shift: it.c - (edge + right) / 2 };
    edge = right;
    return el;
  });
};

const Shift = styled.div<{ $d: number }>`
  transform: translateX(${(p) => p.$d}px);
`;

const Strip = ({ items, start, s = 24 }: { items: Item[]; start: number; s?: number }) => (
  <>
    {stripSlots(items, start).map((it, i) => (
      <IconSlot key={i} $w={it.w}>
        <Shift $d={it.shift}>
          {it.n === "|" ? <Handle /> : it.n === "!" ? <Rule /> : <Ico n={it.n!} s={it.s || s} />}
        </Shift>
        {it.arrow && <SmallArrow />}
      </IconSlot>
    ))}
  </>
);

const BOTTOM: Item[] = [
  { c: 17, n: "printer" }, { c: 45, n: "scissors" }, { c: 73, n: "copy" }, { c: 101, n: "paste" },
  { c: 129, n: "undo", arrow: true }, { c: 160, n: "redo", arrow: true }, { c: 189, n: "help" }, { c: 214, n: "|" },
  { c: 236, n: "fx" }, { c: 264, n: "comment" }, { c: 289, n: "link" }, { c: 314, n: "table", arrow: true },
  { c: 345, n: "tree" }, { c: 374, n: "lock", arrow: true }, { c: 401, n: "formula" }, { c: 427, n: "|" },
  { c: 448, n: "fit" }, { c: 477, n: "pan" }, { c: 505, n: "zoomin" }, { c: 532, n: "zoomout" },
  { c: 561, n: "view1" }, { c: 589, n: "view2" }, { c: 615, n: "|" }, { c: 636, n: "cycle" }, { c: 662, n: "|" },
  { c: 685, n: "gridO" }, { c: 700, n: "!" }, { c: 719, n: "mark" }, { c: 748, n: "handCheck" }, { c: 764, n: "!" },
  { c: 784, n: "hatchHand" }, { c: 800, n: "!" },
  { c: 821, n: "traffic", arrow: true }, { c: 845, n: "|" }, { c: 870, n: "gridO" }, { c: 885, n: "!" }, { c: 906, n: "hatchA" },
  { c: 934, n: "hatchB" }, { c: 962, n: "yellowMag" }, { c: 977, n: "!" }, { c: 998, n: "hatchC" }, { c: 1021, n: "|" },
  { c: 1043, n: "measure" }, { c: 1071, n: "caliper" }, { c: 1097, n: "|" }, { c: 1119, n: "book" },
];

const PAL: Item[] = [
  { c: 8, n: "|" }, { c: 30, n: "palA" }, { c: 57, n: "palB" }, { c: 83, n: "palC" },
  { c: 113, n: "palD" }, { c: 142, n: "palE" }, { c: 169, n: "palF" }, { c: 200, n: "palG" },
];

const TASK: { c: number; n: string; s?: number; active?: boolean }[] = [
  { c: 320, n: "taskView", s: 20 }, { c: 370, n: "fan" }, { c: 425, n: "edge" }, { c: 474, n: "folder" },
  { c: 522, n: "store" }, { c: 571, n: "ie" }, { c: 620, n: "notepad" }, { c: 669, n: "calc" },
  { c: 718, n: "ds" }, { c: 768, n: "dsBlack", active: true }, { c: 816, n: "infinity" }, { c: 865, n: "keyBook" },
  { c: 915, n: "infinity" }, { c: 964, n: "keys" }, { c: 1013, n: "baidu" }, { c: 1061, n: "excel" },
  { c: 1110, n: "cat" }, { c: 1159, n: "cmd" }, { c: 1208, n: "ppt" }, { c: 1258, n: "tool" },
];

const DIALOG_BUTTONS = [
  "创建工作表和交互式视图", "创建文本块", "建立点信息",
  "在两条2D线上创建关联维度", "从平面创建剖面视图", "从3D草图创建剖面视图",
];

const XS = Array.from({ length: 22 }, (_, i) => 335 + i * 66);
const YS = Array.from({ length: 13 }, (_, i) => 161 + i * 66);

const Drawing = () => (
  <Canvas viewBox="312 116 1416 849">
    <defs>
      <radialGradient id="glow">
        <stop offset="0" stopColor="#fdf0a4" />
        <stop offset=".75" stopColor="#fdf2b2" />
        <stop offset="1" stopColor="#fff" stopOpacity="0" />
      </radialGradient>
    </defs>
    {YS.map((y) => (
      <path key={y} d={`M312 ${y + 0.5}H1728`} stroke={y === 425 ? "#cfcfd2" : "#dcdcdc"} strokeDasharray={y === 425 ? undefined : "2 2"} />
    ))}
    {XS.map((x) => (
      <path key={x} d={`M${x + 0.5} 116V965`} stroke={x === 335 || x === 995 ? "#c6c6ca" : "#dcdcdc"} strokeDasharray={x === 335 || x === 995 ? undefined : "2 2"} />
    ))}
    <circle cx="753" cy="228" r="25" fill="url(#glow)" />
    <path d="M1518 116h20v849h-20z" fill="#000" />
    <path d="M1523.500 116V965" stroke="#fff" strokeDasharray="3 4" />
    <path d="M1061.500 116V756" stroke="#4f7090" strokeDasharray="9 3" />
    <path d="M335 227.500H995M1007 227.500H1041M314 755.500H1040" stroke="#111" />
    <path d="M1040 755.500H1061" stroke="#4f7090" strokeDasharray="7 3" />
    <path d="M1028.500 228V466M1028.500 517V755" stroke="#111" strokeWidth="1.200" />
    <path d="M1028.500 228l-4.500 21h9zM1028.500 755l-4.500-21h9z" fill="#000" />
    <circle cx="1005.500" cy="496.500" r="2.300" fill="#000" />
    <text x="1011" y="502" fontFamily="Liberation Sans, sans-serif" fontStyle="italic" fontSize="26" fill="#555">26</text>
    <text x="1042" y="497" fontFamily="Liberation Sans, sans-serif" fontStyle="italic" fontSize="24" fill="#444">'</text>
  </Canvas>
);

export default function App() {
  return (
    <Page>
      <Global />
      <BlackBand />
      <TitleBar>CAAExample.CATDrawing]</TitleBar>
      <MenuBar>
        <MenuLabel>VIA V5 VPM</MenuLabel>
        {["文件", "编辑", "视图", "插入", "工具", "窗口", "帮助"].map((m) => (
          <span key={m}>{m}</span>
        ))}
      </MenuBar>
      <ToolRow>
        <Combo $w={11}><ComboArrow /></Combo>
        <Gap $w={10} />
        <Handle />
        <Gap $w={10} />
        <Combo $w={102}><ComboValue>SICH</ComboValue><ComboArrow /></Combo>
        <Gap $w={3} />
        <Combo $w={55}><ComboValue>3.5</ComboValue><ComboArrow /></Combo>
        <Gap $w={9} />
        <FontBtn $w={28} $serif>B</FontBtn>
        <FontBtn $w={28} $serif $i>I</FontBtn>
        <FontBtn $w={28} $u>S<SmallArrow /></FontBtn>
        <FontBtn $w={32} $st $thin $c="#444">S</FontBtn>
        <FontBtn $w={26} $thin $c="#b4b4c4">x<Sup>2</Sup></FontBtn>
        <Gap $w={9} />
        <IconSlot $w={30}><Ico n="align" s={20} /><SmallArrow /></IconSlot>
        <IconSlot $w={30}><FadedA>⁺A</FadedA><SmallArrow /></IconSlot>
        <IconSlot $w={30}><BoxA>A</BoxA><SmallArrow /></IconSlot>
        <IconSlot $w={42}><Ico n="tol" /><SmallArrow /></IconSlot>
        <Handle />
        <Gap $w={6} />
        <IconSlot $w={30}><Ico n="dim" /><SmallArrow /></IconSlot>
        <Gap $w={14} />
        <Combo $w={114}><ComboValue>（无公差）</ComboValue><ComboArrow /></Combo>
        <Gap $w={3} />
        <Combo $w={67}><ComboValue>+-0.05</ComboValue><ComboArrow /></Combo>
        <Gap $w={10} />
        <Handle />
        <Gap $w={9} />
        <Combo $w={91}><ComboValue>FEET-INC</ComboValue><ComboArrow /></Combo>
        <Gap $w={3} />
        <Combo $w={55}><ComboValue>0.0100</ComboValue><ComboArrow /></Combo>
        <Gap $w={11} />
        <Handle />
        <Gap $w={9} />
        <Combo $w={67}><Swatch /><Gap $w={5} /><ComboValue /><ComboArrow /></Combo>
        <Gap $w={4} />
        <Combo $w={66}><RuleLine $l={40} $c="#111" /><ComboValue /><ComboArrow /></Combo>
        <Gap $w={5} />
        <Combo $w={67}><RuleLine $l={40} $c="#777" /><ComboValue /><ComboArrow $off /></Combo>
        <Gap $w={4} />
        <Combo $w={41}><Dot /><ComboValue /><ComboArrow $off /></Combo>
        <Gap $w={4} />
        <Combo $w={68}><ComboValue>无</ComboValue><ComboArrow /></Combo>
        <IconSlot $w={28}><Ico n="brush" s={22} /></IconSlot>
        <IconSlot $w={28}><Ico n="hatch" s={24} /></IconSlot>
      </ToolRow>
      <Body>
        <LeftColumn>
          <TreeRow>
            <Tree>
              <TreeItem $pl={0}><Selected $ml={-7}>AAExample</Selected></TreeItem>
              <TreeItem $pl={7} $cjk>图纸.1</TreeItem>
              <TreeItem $pl={7}><Selected>MyNewSheet</Selected></TreeItem>
              <TreeItem $pl={2} $cjk><Ico n="tree3d" />正视图</TreeItem>
            </Tree>
            <VScroll>
              <ScrollBtn $dir="up" />
              <ScrollBtn $dir="down" />
            </VScroll>
          </TreeRow>
          <HScroll><ScrollBtn $dir="right" /></HScroll>
        </LeftColumn>
        <Sash />
        <RightColumn>
          <Tabs>
            <Tab $w={52}>图纸.1</Tab>
            <Tab $w={101} $active>MyNewSheet</Tab>
          </Tabs>
          <CanvasFrame>
            <Drawing />
            <CanvasFooter />
          </CanvasFrame>
        </RightColumn>
      </Body>
      <BottomBar>
        <Strip items={BOTTOM} start={0} />
      </BottomBar>
      <StatusBar>
        <StatusText>寸的第一个元素</StatusText>
        <StatusField />
      </StatusBar>
      <Taskbar>
        <SearchBox>
          <SearchHint>这里输入你要搜索的内容</SearchHint>
          <Ico n="mic" s={20} />
        </SearchBox>
        {TASK.map((t, i) => {
          const left = i === 0 ? 296 : (TASK[i - 1].c + t.c) / 2;
          const right = TASK[i + 1] ? (t.c + TASK[i + 1].c) / 2 : t.c + 25;
          return (
            <TaskSlot key={i} $w={right - left} $active={t.active}>
              <Ico n={t.n} s={t.s || 24} />
            </TaskSlot>
          );
        })}
        <Gap $w={253} />
        <TaskSlot $w={24}><Ico n="caret" s={14} /></TaskSlot>
        <TaskSlot $w={25}><Ico n="plus" s={18} /></TaskSlot>
        <TaskSlot $w={24}><Ico n="wifi" s={16} /></TaskSlot>
        <TaskSlot $w={24}><Ico n="speaker" s={18} /></TaskSlot>
        <TaskSlot $w={24}>英</TaskSlot>
        <TaskSlot $w={34}><MBadge>M</MBadge></TaskSlot>
        <Clock>
          <ClockTime>19</ClockTime>
          <div>2017-</div>
        </Clock>
      </Taskbar>
      <BlackBand />

      <Recorder>
        <RecGrip />
        <RecCell $w={47}>高清</RecCell>
        <RecCell $w={45} $on><RecDash /></RecCell>
        <RecCell $w={46}><RecWin /></RecCell>
        <RecCell $w={46}><Ico n="homeRec" s={18} /></RecCell>
        <RecCell $w={45}>结束</RecCell>
      </Recorder>

      <Palette $x={2} $y={280} $w={213}>
        <PaletteHead $h={33} $fs={12}>
          <PaletteName>工具控制板</PaletteName>
          <CloseX>x</CloseX>
        </PaletteHead>
        <PaletteBody $h={31}>
          <Strip items={PAL} start={2} s={23} />
        </PaletteBody>
      </Palette>

      <Palette $x={42} $y={361} $w={344}>
        <PaletteHead $h={32} $fs={13}>
          <PaletteName>ENOVIA V5 VPM Navigator</PaletteName>
          <CloseX>x</CloseX>
        </PaletteHead>
        <PaletteBody $h={38}>
          <Gap $w={5} />
          <Handle />
          <Gap $w={11} />
          <EnoviaLogo>
            <DsLetter $x={4} $y={5} $c="#3a3a9a" $fs={19}>D</DsLetter>
            <DsLetter $x={16} $y={7} $c="#b0702a" $fs={19}>S</DsLetter>
            <DsLetter $x={13} $y={-3} $c="#a84a6a" $fs={15}>3</DsLetter>
            <EnoviaText>ENOVIA</EnoviaText>
          </EnoviaLogo>
          <Gap $w={5} />
          <IconSlot $w={35}><Ico n="navA" /></IconSlot>
          <NavCheck />
          <NavSearch>ENOVIA 搜索...</NavSearch>
          <IconSlot $w={30}><Ico n="navB" s={22} /></IconSlot>
          <IconSlot $w={30}><Ico n="navC" s={22} /></IconSlot>
          <PaletteDivider />
          <IconSlot $w={36}><Ico n="navD" /></IconSlot>
          <PaletteDivider />
          <IconSlot $w={34}><Ico n="navE" /></IconSlot>
        </PaletteBody>
      </Palette>

      <Dialog>
        <DialogHead>
          <DialogTitle>CAARDExamp...</DialogTitle>
          <Gap $w={8} />
          <DialogCtl $w={20}><CtlMin /></DialogCtl>
          <Gap $w={24} />
          <DialogCtl $w={20}><CtlMax /></DialogCtl>
          <Gap $w={26} />
          <DialogCtl $w={20}>
            <IconBox $s={12} viewBox="0 0 12 12"><path d="M1 1l10 10M11 1L1 11" stroke="#777" /></IconBox>
          </DialogCtl>
        </DialogHead>
        <DialogBody>
          <Globe viewBox="0 0 46 26">
            <defs>
              <radialGradient id="sun" cx=".35" cy="1" r=".9">
                <stop offset="0" stopColor="#f0a040" />
                <stop offset="1" stopColor="#f8e4b8" stopOpacity="0" />
              </radialGradient>
            </defs>
            <rect width="46" height="26" fill="url(#sun)" />
            <path d="M0 14c10-3 22 2 26 12H0z" fill="#6a7a8c" />
            <path d="M0 20c6-1 11 2 13 6H0z" fill="#333e4c" />
          </Globe>
          {DIALOG_BUTTONS.map((b) => (
            <DlgButton key={b}>{b}</DlgButton>
          ))}
        </DialogBody>
      </Dialog>
    </Page>
  );
}
